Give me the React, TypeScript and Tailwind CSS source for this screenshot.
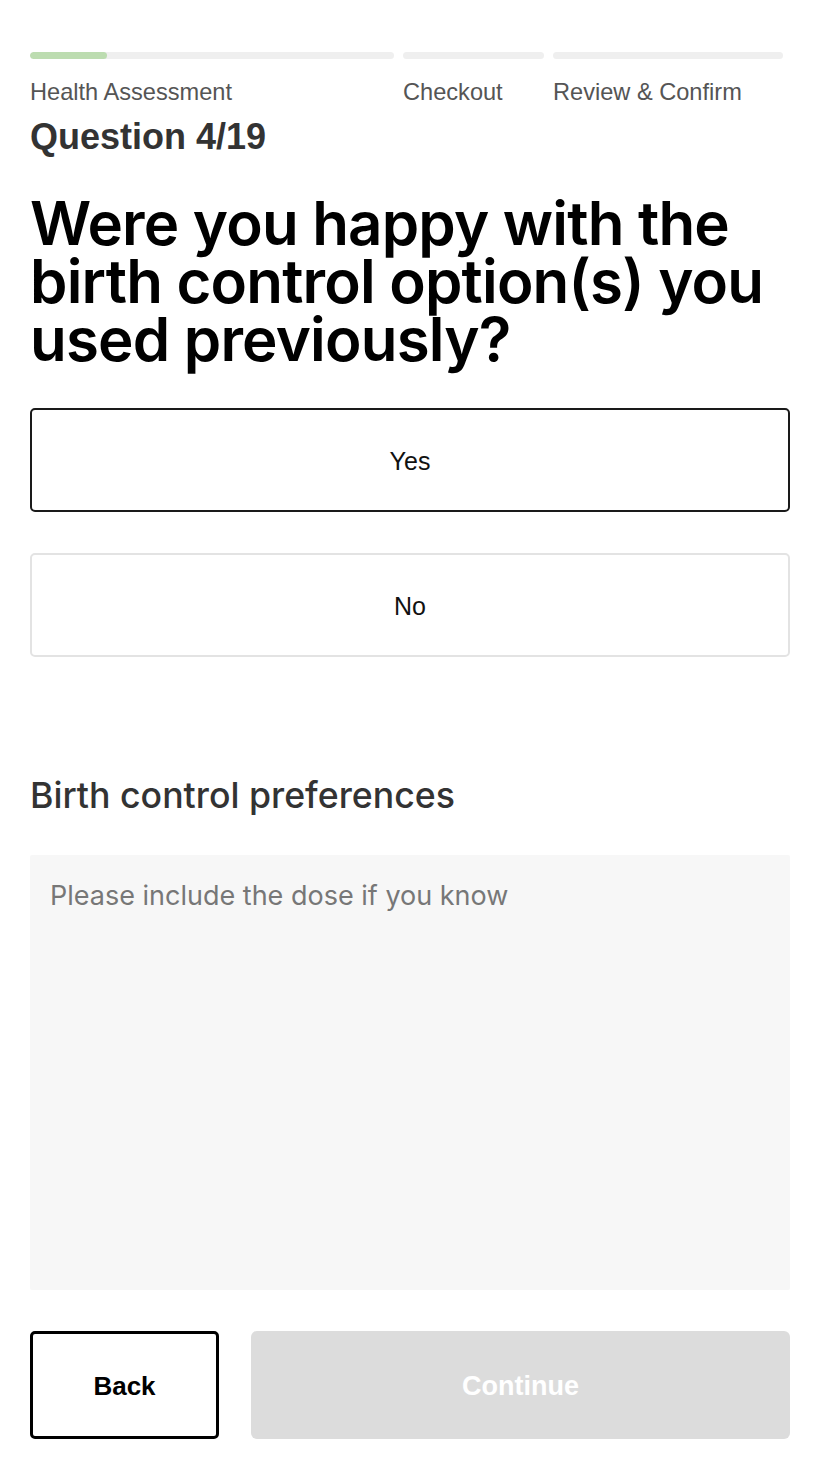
import React, { useState } from "react";

const steps = [
  { label: "Health Assessment", width: "w-[364px]", done: true },
  { label: "Checkout", width: "w-[141px]", done: false },
  { label: "Review & Confirm", width: "w-[230px]", done: false },
];

export default function App() {
  const [answer, setAnswer] = useState<"yes" | "no" | null>("yes");
  const [notes, setNotes] = useState("");

  return (
    <div className="min-h-screen bg-white px-[30px] pt-[52px] pb-[19px] text-[#111]" style={{ fontFamily: "'Liberation Sans', Arial, sans-serif" }}>
      {/* Progress */}
      <div className="flex gap-[9px]">
        {steps.map((s) => (
          <div key={s.label} className={`${s.width} shrink-0`}>
            <div className="h-[7px] rounded-full bg-[#efefef] overflow-hidden">
              {s.done && <div className="h-full w-[77px] rounded-full bg-[#bcdcb0]" />}
            </div>
            <div className="mt-[19px] text-[23.6px] leading-[28px] text-[#555] whitespace-nowrap">{s.label}</div>
          </div>
        ))}
      </div>

      <div className="mt-[11px] text-[36px] leading-[40px] font-bold text-[#333]">Question 4/19</div>

      <h1
        className="mt-[37px] text-[60px] leading-[58px] font-semibold text-black tracking-[-0.8px]"
        style={{ fontFamily: "Inter, sans-serif" }}
      >
        Were you happy with the birth control option(s) you used previously?
      </h1>

      {/* Options */}
      <div className="mt-[40px] flex flex-col gap-[41px]">
        <button
          onClick={() => setAnswer("yes")}
          className={`h-[104px] w-full rounded-[5px] bg-white pt-[4px] text-[25px] text-[#111] ${answer === "yes" ? "border-2 border-[#1a1a1a]" : "border-2 border-[#e3e3e3]"}`}
        >
          Yes
        </button>
        <button
          onClick={() => setAnswer("no")}
          className={`h-[104px] w-full rounded-[5px] bg-white pt-[4px] text-[25px] text-[#111] ${answer === "no" ? "border-2 border-[#1a1a1a]" : "border-2 border-[#e3e3e3]"}`}
        >
          No
        </button>
      </div>

      <div
        className="mt-[118px] text-[35.7px] leading-[40px] font-medium text-[#333]"
        style={{ fontFamily: "Inter, sans-serif" }}
      >
        Birth control preferences
      </div>

      <textarea
        value={notes}
        onChange={(e) => setNotes(e.target.value)}
        placeholder="Please include the dose if you know"
        className="mt-[40px] block h-[435px] w-full resize-none rounded-[2px] bg-[#f7f7f7] px-[20px] pt-[24px] pb-[20px] text-[27px] leading-[34px] text-[#333] placeholder:text-[#777] outline-none"
        style={{ fontFamily: "Inter, sans-serif" }}
      />

      {/* Footer */}
      <div className="mt-[41px] flex gap-[32px]">
        <button className="h-[108px] w-[189px] shrink-0 rounded-[5px] border-[3px] border-black bg-white pt-[2px] text-[26px] font-bold text-black">
          Back
        </button>
        <button disabled className="h-[108px] flex-1 rounded-[6px] bg-[#dcdcdc] pt-[2px] text-[27px] font-bold text-white">
          Continue
        </button>
      </div>
    </div>
  );
}
